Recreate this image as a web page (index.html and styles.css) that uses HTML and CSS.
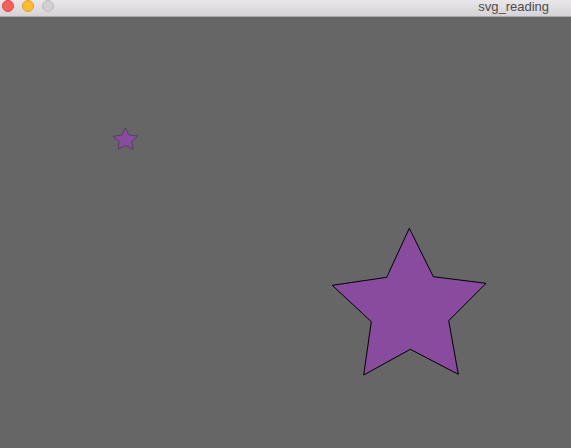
FILE: index.html
```html
<!DOCTYPE html>
<html>
<head>
<meta charset="utf-8">
<link rel="stylesheet" href="styles.css">
</head>
<body>
<div class="window">
  <div class="titlebar">
    <div class="lights">
      <span class="light red"></span>
      <span class="light yellow"></span>
      <span class="light grey"></span>
    </div>
    <div class="title">svg_reading</div>
  </div>
  <div class="canvas">
    <svg class="stage" width="571" height="431" viewBox="0 17 571 431" xmlns="http://www.w3.org/2000/svg">
      <polygon class="star small" points="125.3,128 129.1,135 137.7,136 131.6,141.4 133.2,149.2 125.5,145.5 118.0,149.3 119.2,141.5 113,136.3 121.7,135.1"/>
      <polygon class="star big" points="409.3,228.3 433.3,276.7 486,283.3 448.7,320.7 458.3,374.3 410.3,349.3 363.7,375 371.3,321.7 332.3,285.3 386.7,277.3"/>
    </svg>
  </div>
</div>
</body>
</html>
```
FILE: styles.css
```css
html, body {
  margin: 0;
  padding: 0;
  background: #666666;
  overflow: hidden;
}
.window {
  width: 571px;
  height: 448px;
  display: flex;
  flex-direction: column;
}
.titlebar {
  height: 16px;
  flex: 0 0 16px;
  background: linear-gradient(#e9e7e9, #d5d3d5);
  border-bottom: 1px solid #aaa9aa;
  display: flex;
  align-items: center;
  justify-content: space-between;
  padding: 0 22px 0 2px;
}
.lights {
  display: flex;
  gap: 8px;
  margin-top: -4px;
}
.light {
  width: 12px;
  height: 12px;
  border-radius: 50%;
  box-sizing: border-box;
}
.red { background: #fc5f57; border: 1px solid #e0443e; }
.yellow { background: #fdbc2e; border: 1px solid #dea123; }
.grey { background: #d0d0d0; border: 1px solid #bcbcbc; }
.title {
  font-family: "Liberation Sans", Arial, sans-serif;
  font-size: 13px;
  color: #4d4d4d;
  margin-top: -3px;
}
.canvas {
  flex: 1;
  background: #666666;
}
.stage {
  display: block;
}
.star {
  fill: #894b9d;
  stroke: #000;
  stroke-linejoin: miter;
}
.star.big { stroke-width: 1; }
.star.small { stroke-width: 0.5; stroke: #3a2a40; }
```
